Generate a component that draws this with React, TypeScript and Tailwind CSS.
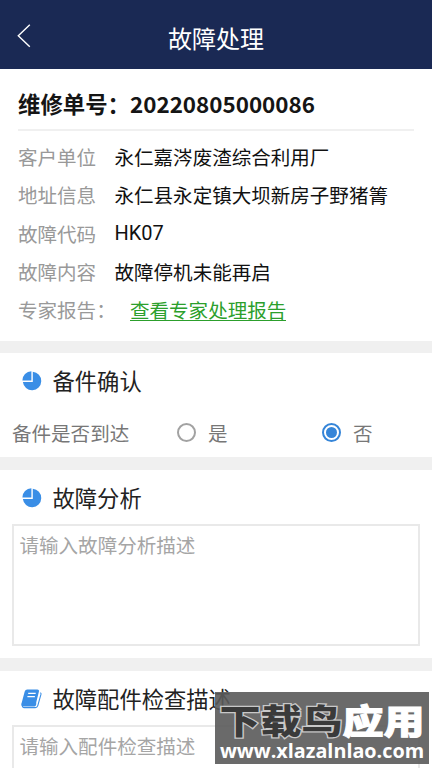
import type { ReactNode } from "react";

const details = [
  { label: "客户单位", value: "永仁嘉涔废渣综合利用厂" },
  { label: "地址信息", value: "永仁县永定镇大坝新房子野猪箐" },
  { label: "故障代码", value: "HK07", latin: true },
  { label: "故障内容", value: "故障停机未能再启" },
];

function PieIcon() {
  return (
    <svg className="h-5 w-5" viewBox="0 0 20 20" fill="#3a8ee6">
      <path d="M10.8 .8A9.2 9.2 0 1 1 .9 10.9H10.8Z" />
      <path d="M9.4 .3V9.5H.4A9.1 9.1 0 0 1 9.4 .3Z" />
    </svg>
  );
}

function BookIcon() {
  return (
    <svg className="-ml-px h-5 w-[21px]" viewBox="0 0 21 20" fill="none">
      <path d="M6.2 .5H16.4Q18.4 .5 18 2.2L15 14.2Q14.6 15.6 13.2 15.6H3.3Q2 15.8 2.2 17H1.1Q.1 16.2 .5 14.6L3.7 2.4Q4.3 .5 6.2 .5Z" fill="#3a8ee6" />
      <path d="M1 15.5Q1.2 18.6 3.2 18.6H14.3Q16.2 18.6 16.8 16.6L20 5.2Q20.2 4.2 19.4 3.6" stroke="#3a8ee6" strokeWidth="1.1" />
      <path d="M.8 14Q.6 17.4 3 17.4H13.6Q15 17.4 15.3 15L15 13Z" fill="#3a8ee6" />
      <path d="M7.2 4.4H14.7M6.4 7.6H13.9" stroke="#fff" strokeWidth="1.2" />
    </svg>
  );
}

function SectionTitle({ icon, children }: { icon: ReactNode; children: ReactNode }) {
  return (
    <div className="flex h-[55px] items-center gap-[10.5px] pl-[22px]">
      {icon}
      <h2 className="text-[22.3px] leading-none text-[#222]">{children}</h2>
    </div>
  );
}

function Radio({ checked, label }: { checked?: boolean; label: string }) {
  return (
    <span className="flex items-center gap-[12px]">
      <span className={`flex h-[19px] w-[19px] items-center justify-center rounded-full border-2 ${checked ? "border-[#3585d8]" : "border-[#a2a2a2]"}`}>
        {checked && <span className="h-[11px] w-[11px] rounded-full bg-[#3585d8]" />}
      </span>
      <span>{label}</span>
    </span>
  );
}

export default function App() {
  return (
    <div className="relative flex h-[768px] w-[432px] flex-col overflow-hidden bg-[#f0f0f0] font-['Noto_Sans_CJK_SC',sans-serif]">
      <header className="grid h-[69px] shrink-0 grid-cols-[48px_1fr_48px] bg-[#1a2954] pt-[7px] text-white">
        <svg className="mt-[17px] ml-[17px] h-6 w-4" viewBox="0 0 16 24" fill="none" stroke="white" strokeWidth="1.4">
          <path d="M12.8 .8 1.3 11.8 12.8 22.8" />
        </svg>
        <h1 className="flex items-center justify-center text-2xl leading-none">故障处理</h1>
      </header>

      <section className="h-[272px] shrink-0 bg-white px-[18px]">
        <div className="flex h-[62px] items-center border-b-2 border-[#f0f0f0] pt-2 text-[22.4px] leading-none font-bold text-[#151515]">
          <span className="w-28 whitespace-nowrap">维修单号：</span>
          <span>20220805000086</span>
        </div>
        <div className="pt-[6.5px] text-[19.55px] leading-none">
          {details.map((row) => (
            <div key={row.label} className="flex h-[38.4px] items-center whitespace-nowrap">
              <span className="w-[96.5px] text-[#999]">{row.label}</span>
              <span className={row.latin ? "font-['Roboto',sans-serif] text-[20px] text-[#111]" : "text-[#111]"}>{row.value}</span>
            </div>
          ))}
          <div className="flex h-[38.4px] items-center whitespace-nowrap">
            <span className="w-28 text-[#999]">专家报告：</span>
            <a className="border-b-[1.5px] border-[#2c9f2c] text-[#2c9f2c]">查看专家处理报告</a>
          </div>
        </div>
      </section>

      <section className="mt-3 h-[104px] shrink-0 bg-white">
        <SectionTitle icon={<PieIcon />}>备件确认</SectionTitle>
        <div className="grid h-[49px] grid-cols-[165px_145px_1fr] items-center pl-3 text-[19.55px] leading-none text-[#777]">
          <span>备件是否到达</span>
          <Radio label="是" />
          <Radio checked label="否" />
        </div>
      </section>

      <section className="mt-[13px] h-[188px] shrink-0 bg-white">
        <SectionTitle icon={<PieIcon />}>故障分析</SectionTitle>
        <div className="mx-3 -mt-px h-[122px] border-2 border-[#e9e9e9] px-[5.5px] pt-[9px] text-[19.55px] leading-none text-[#a5a5a5]">
          请输入故障分析描述
        </div>
      </section>

      <section className="mt-[13px] h-[97px] shrink-0 bg-white">
        <SectionTitle icon={<BookIcon />}>故障配件检查描述</SectionTitle>
        <div className="mx-3 -mt-px h-[122px] border-2 border-[#e9e9e9] px-[5.5px] pt-[9px] text-[19.55px] leading-none text-[#a5a5a5]">
          请输入配件检查描述
        </div>
      </section>

      <div className="absolute top-[692px] left-[215px] flex h-[72px] w-[214px] flex-col items-center bg-[#5a5a5a]/90 whitespace-nowrap">
        <div className="mt-[9px] mb-[3px] origin-center scale-y-[0.82] text-[41px] leading-[36px] font-black text-white">
          <span className="text-[#3a3a3a] [-webkit-text-stroke:3px_#c8c8c8] [paint-order:stroke_fill]">下载鸟</span>
          <span className="[-webkit-text-stroke:1.2px_white]">应用</span>
        </div>
        <div className="font-['Open_Sans',sans-serif] text-[19.8px] leading-[22px] font-bold text-white">www.xlazalnlao.com</div>
      </div>
    </div>
  );
}
